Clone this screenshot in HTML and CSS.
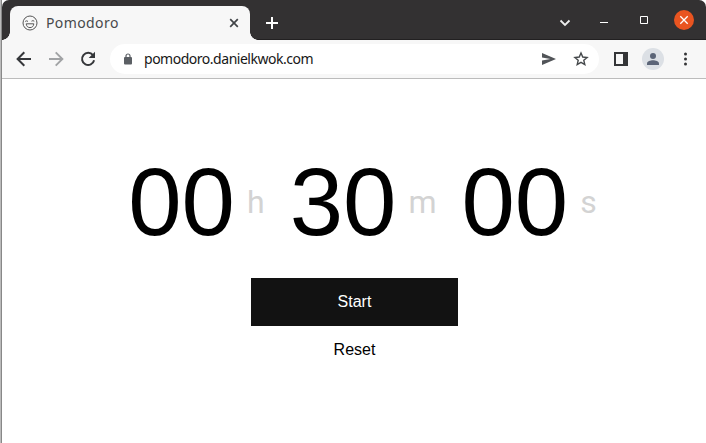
FILE: index.html
```
<!DOCTYPE html>
<html lang="en">
<head>
<meta charset="utf-8">
<title>Pomodoro</title>
<link rel="stylesheet" href="styles.css">
</head>
<body>
<div class="window">
  <header class="tabbar">
    <div class="tab">
      <svg class="favicon" width="16" height="16" viewBox="0 0 16 16" fill="none" stroke="#555" stroke-width="1"><circle cx="8" cy="8" r="7"/><path d="M3.2 6.4q1.4-1.1 2.8 0M9.500 6.200q1.400-1.100 2.800 0M4.200 8.800h7.600c-.2 2.600-1.800 3.800-3.800 3.800S4.400 11.400 4.200 8.800z"/></svg>
      <span class="tab-title">Pomodoro</span>
      <svg class="tab-close" width="10" height="10" viewBox="0 0 10 10" stroke="#414447" stroke-width="1.7"><path d="M1.2 1.2l7.6 7.6M8.8 1.2L1.2 8.8"/></svg>
    </div>
    <svg class="new-tab" width="12" height="12" viewBox="0 0 12 12" stroke="#fff" stroke-width="2"><path d="M6 0v12M0 6h12"/></svg>
    <div class="controls">
      <svg width="12" height="8" viewBox="0 0 12 8" fill="none" stroke="#eee" stroke-width="1.8"><path d="M1.5 1.5L6 6l4.500-4.500"/></svg>
      <svg class="minimize" width="8" height="1" viewBox="0 0 8 1"><path d="M0 0h8v1H0z" fill="#fff"/></svg>
      <svg class="maximize" width="8" height="8" viewBox="0 0 8 8"><path d="M.5.500h7v7h-7z" fill="none" stroke="#fff"/></svg>
      <svg class="close" width="20" height="20" viewBox="0 0 20 20"><circle cx="10" cy="10" r="10" fill="#e95420"/><path d="M6.300 6.300l7.400 7.400M13.700 6.300l-7.400 7.400" stroke="#fff" stroke-width="1.300"/></svg>
    </div>
  </header>
  <nav class="toolbar">
    <svg width="16" height="16" viewBox="0 0 16 16" fill="none" stroke="#35373a" stroke-width="2"><path d="M15 8H2M8.300 1.300L1.600 8l6.700 6.700"/></svg>
    <svg class="forward" width="16" height="16" viewBox="0 0 16 16" fill="none" stroke="#a1a3a5" stroke-width="1.900"><path d="M1 8h13M7.700 1.300L14.400 8l-6.700 6.700"/></svg>
    <svg class="reload" width="16" height="16" viewBox="0 0 16 16"><path d="M13 4.200A6.100 6.100 0 1 0 14.100 9.300" fill="none" stroke="#35373a" stroke-width="2"/><path d="M15 .8v6.300H8.700z" fill="#35373a"/></svg>
    <div class="address">
      <svg class="lock" width="8" height="12" viewBox="0 0 8 12"><rect y="4" width="8" height="7.500" rx="1" fill="#5b5f64"/><path d="M2 4.500V3a2 2 0 0 1 4 0v1.500" fill="none" stroke="#5b5f64" stroke-width="1.200"/></svg>
      <span class="url">pomodoro.danielkwok.com</span>
      <svg class="send" width="14" height="12" viewBox="0 0 14 12"><path d="M0 0l14 6L0 12V7.400L8.500 6 0 4.600z" fill="#515458"/></svg>
      <svg class="star" width="16" height="16" viewBox="0 0 16 16" fill="none" stroke="#45484b" stroke-width="1.400"><path d="M8 2l1.750 4.050 4.350.380-3.300 2.870 1 4.250L8 11.300l-3.800 2.250 1-4.250-3.300-2.870 4.350-.380z"/></svg>
    </div>
    <svg class="panel" width="14" height="14" viewBox="0 0 14 14"><path fill="#343537" fill-rule="evenodd" d="M0 0h14v14H0zM2 2v10h7V2z"/></svg>
    <svg class="avatar" width="22" height="22" viewBox="0 0 22 22"><circle cx="11" cy="11" r="11" fill="#dce0e5"/><circle cx="11" cy="8" r="3" fill="#5b6477"/><path d="M5 17v-1.500c0-2.200 3.500-3.200 6-3.200s6 1 6 3.200V17z" fill="#5b6477"/></svg>
    <svg class="menu" width="4" height="14" viewBox="0 0 4 14" fill="#343537"><circle cx="2.500" cy="2" r="1.500"/><circle cx="2.500" cy="7" r="1.500"/><circle cx="2.500" cy="12" r="1.500"/></svg>
  </nav>
  <main class="page">
    <div class="timer">
      <span class="digits">00</span><span class="unit">h</span>
      <span class="digits">30</span><span class="unit">m</span>
      <span class="digits">00</span><span class="unit">s</span>
    </div>
    <button class="button start">Start</button>
    <button class="button reset">Reset</button>
  </main>
</div>
</body>
</html>
```
FILE: styles.css
```
* { box-sizing: border-box; }
body {
  margin: 0;
  background: #fff;
  font-family: "Liberation Sans", Arial, sans-serif;
  overflow: hidden;
}
svg { display: block; flex: none; }
.window {
  height: 443px;
  padding-left: 2px;
  background: linear-gradient(90deg, #bbb 1px, #888 1px, #888 2px, #fff 2px);
}
.tabbar {
  display: flex;
  height: 40px;
  padding: 6px 12px 0 8px;
  background: #333132;
  border-bottom: 1px solid #222021;
  border-radius: 7px 7px 0 0;
}
.tab {
  position: relative;
  display: flex;
  align-items: center;
  width: 240px;
  height: 34px;
  padding: 0 11px 0 12px;
  background: #f7f7f7;
  border-radius: 8px 8px 0 0;
}
.tab::before, .tab::after {
  content: "";
  position: absolute;
  bottom: 0;
  width: 8px;
  height: 8px;
}
.tab::before {
  left: -8px;
  background: radial-gradient(circle at 0 0, transparent 7.500px, #f7f7f7 8px);
}
.tab::after {
  right: -8px;
  background: radial-gradient(circle at 100% 0, transparent 7.500px, #f7f7f7 8px);
}
.tab-title {
  margin-left: 8px;
  font: 14px/20px "Noto Sans", sans-serif;
  letter-spacing: 0.400px;
  color: #47494b;
}
.tab-close { margin-left: auto; }
.new-tab { margin: 11px 0 0 16px; }
.controls {
  display: flex;
  align-items: center;
  height: 28px;
  margin-left: auto;
}
.controls svg:first-child { margin-top: 6px; }
.minimize { margin: 5px 0 0 29px; }
.maximize { margin-left: 32px; }
.close { margin-left: 26px; }
.toolbar {
  display: flex;
  align-items: center;
  height: 39px;
  padding: 0 19px 0 14px;
  background: #f7f7f7;
  border-bottom: 1px solid #bcbcbc;
}
.forward { margin-left: 16px; }
.reload { margin-left: 16px; }
.address {
  display: flex;
  align-items: center;
  width: 489px;
  height: 30px;
  margin-left: 14px;
  padding: 0 10px 0 14px;
  background: #fff;
  border-radius: 15px;
}
.url {
  margin-left: 12px;
  font: 14px/20px "Noto Sans", sans-serif;
  letter-spacing: -0.480px;
  color: #171717;
}
.send { margin-left: auto; }
.star { margin-left: 17px; }
.panel { margin-left: 15px; }
.avatar { margin-left: 14px; }
.menu { margin-left: auto; }
.page {
  display: flex;
  flex-direction: column;
  align-items: center;
  padding: 68px 0 0;
}
.timer {
  display: flex;
  align-items: center;
  height: 110px;
  padding-left: 17px;
  line-height: 110px;
}
.digits { font-size: 96px; color: #000; }
.unit {
  margin: 0 25px 0 12px;
  font: 32px/38px Roboto, sans-serif;
  color: #d3d3d3;
}
.unit:last-child { margin-right: 0; }
.button {
  width: 207px;
  height: 48px;
  padding: 0 0 0 1px;
  border: 0;
  font: 16px/48px "Liberation Sans", Arial, sans-serif;
}
.start { margin-top: 21px; background: #121212; color: #fff; }
.reset { background: transparent; color: #000; }
```
